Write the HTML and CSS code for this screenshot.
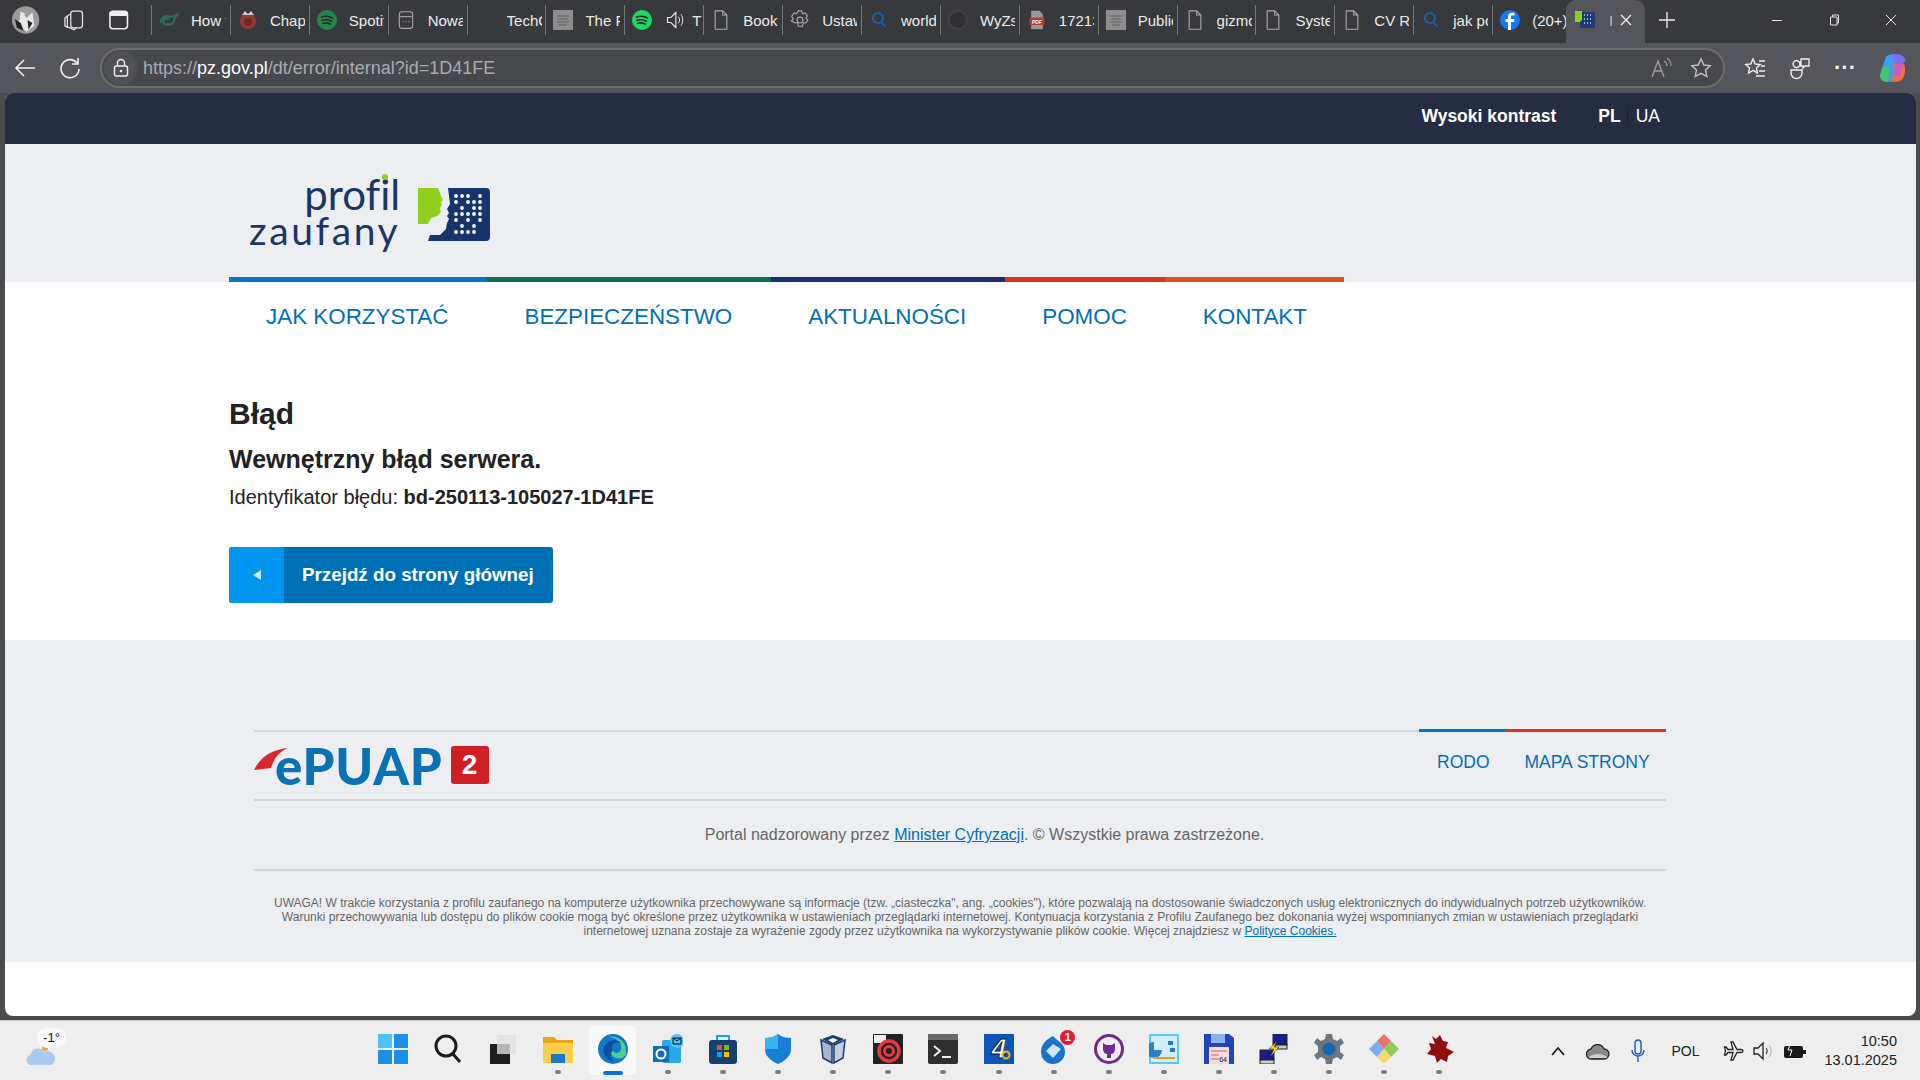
FILE: index.html
```html
<!DOCTYPE html>
<html lang="pl">
<head>
    <meta charset="utf-8">
    <title>Błąd - Profil Zaufany</title>
    <link rel="stylesheet" href="styles.css">
</head>
<body>
    <svg class="sprite" aria-hidden="true">
        <symbol id="i-doc" viewBox="0 0 20 24"><path d="M3 1h9l5 5v17H3zM12 1v5h5" fill="none" stroke="#a9aaad" stroke-width="1.3"/></symbol>
        <symbol id="i-spotify" viewBox="0 0 20 20"><circle cx="10" cy="10" r="10" fill="currentColor"/><path d="M4.500 7c4-1.200 8-.8 11 1M5 10.200c3.500-.9 7-.5 9.500 1M5.800 13.200c3-.7 5.500-.3 7.700.9" fill="none" stroke="#26272a" stroke-width="1.600" stroke-linecap="round"/></symbol>
        <symbol id="i-search" viewBox="0 0 20 20"><circle cx="9" cy="8" r="5" fill="none" stroke="#1d5fa8" stroke-width="2"/><path d="M12.500 12l4 5" stroke="#1d5fa8" stroke-width="2"/></symbol>
        <symbol id="i-thumb" viewBox="0 0 20 20"><rect width="20" height="20" fill="#8e8e8e"/><path d="M4 6h12M5 9h10M4 12h12M6 15h8" stroke="#5f5f5f"/></symbol>
    </svg>

    <div class="tabstrip">
        <div class="strip-start">
            <svg class="avatar" viewBox="0 0 30 30"><circle cx="15" cy="15" r="14" fill="#9a9a9a"/><path d="M6 20l6-12 4 5 6-6 2 14-8 6zM10 6l5 3-6 4z" fill="#e8e8e8"/><path d="M4 14l6 4 3 8-7-3zM17 15l5 3-4 7z" fill="#222"/></svg>
            <svg class="strip-icon" viewBox="0 0 24 24"><rect x="9" y="3" width="12" height="17" rx="2.500" fill="none" stroke="#e6e6e6" stroke-width="1.300"/><path d="M9 5.500L5.500 8v11l7 3 2-2M5.500 8L3 10v8l3 2" fill="none" stroke="#e6e6e6" stroke-width="1.300"/></svg>
            <svg class="strip-icon" viewBox="0 0 24 24"><rect x="3" y="3" width="18" height="18" rx="3" fill="none" stroke="#f0f0f0" stroke-width="1.600"/><rect x="3" y="3" width="18" height="5" rx="2" fill="#f0f0f0"/></svg>
        </div>
        <div class="tab"><svg class="favicon" viewBox="0 0 20 20"><path d="M2 13a6 6 0 0 1 9-6l7-2-3 4c1 4-3 6-6 5a3 3 0 1 1 1-4" fill="none" stroke="#2e6e58" stroke-width="2.200"/></svg><span class="tab-label">How to</span></div>
        <div class="tab"><svg class="favicon" viewBox="0 0 20 20"><circle cx="10" cy="11" r="8" fill="#96392e"/><circle cx="10" cy="12" r="4" fill="#6b2a24"/><path d="M4 5l3-4 3 3 3-3 3 4z" fill="#c9c9c9"/></svg><span class="tab-label">Chapter</span></div>
        <div class="tab"><svg class="favicon spotify-dim"><use href="#i-spotify"/></svg><span class="tab-label">Spotify</span></div>
        <div class="tab"><svg class="favicon" viewBox="0 0 20 24"><rect x="2" y="2" width="16" height="20" rx="3" fill="none" stroke="#a9aaad" stroke-width="1.300"/><path d="M2 8h16" stroke="#a9aaad" stroke-width="1.300"/><path d="M6 14h1M9.500 14h1M13 14h1" stroke="#a9aaad" stroke-width="1.500"/></svg><span class="tab-label">Nowa</span></div>
        <div class="tab"><span class="favicon"></span><span class="tab-label">TechCrunch</span></div>
        <div class="tab"><svg class="favicon"><use href="#i-thumb"/></svg><span class="tab-label">The Fo</span></div>
        <div class="tab tab-audio">
            <svg class="favicon spotify-bright"><use href="#i-spotify"/></svg>
            <svg class="favicon" viewBox="0 0 22 24"><path d="M2 9h4l6-6v18l-6-6H2z" fill="none" stroke="#e6e6e6" stroke-width="1.400"/><path d="M15 8c2 2.500 2 5.500 0 8M18 5c3 4 3 10 0 14" fill="none" stroke="#e6e6e6" stroke-width="1.200"/></svg>
            <span class="tab-label">T</span>
        </div>
        <div class="tab"><svg class="favicon"><use href="#i-doc"/></svg><span class="tab-label">Bookmarks</span></div>
        <div class="tab"><svg class="favicon" viewBox="0 0 24 24"><circle cx="12" cy="12" r="3.500" fill="none" stroke="#a9aaad" stroke-width="1.300"/><path d="M10 1h4l1 3.500 3-1 3 3.500-2 3 2.500 2-2.500 3.500-3-.5-1 4.500h-5l-1-4.500-3 .5L1.500 13 4 11 2 7.500 5 3.500l3 1z" fill="none" stroke="#a9aaad" stroke-width="1.300"/></svg><span class="tab-label">Ustawienia</span></div>
        <div class="tab"><svg class="favicon"><use href="#i-search"/></svg><span class="tab-label">world</span></div>
        <div class="tab"><svg class="favicon" viewBox="0 0 20 20"><circle cx="10" cy="10" r="9" fill="#2f3033" stroke="#444" stroke-width="1.500"/></svg><span class="tab-label">WyZsz</span></div>
        <div class="tab"><svg class="favicon" viewBox="0 0 20 24"><path d="M3 1h10l4 4v5H3z" fill="#9a9a9a"/><rect x="1" y="9" width="18" height="9" fill="#b33a3a"/><path d="M3 18h14v5H3z" fill="#9a9a9a"/><text x="10" y="16.500" class="pdf-text">PDF</text></svg><span class="tab-label">17213</span></div>
        <div class="tab"><svg class="favicon"><use href="#i-thumb"/></svg><span class="tab-label">Public</span></div>
        <div class="tab"><svg class="favicon"><use href="#i-doc"/></svg><span class="tab-label">gizmodo</span></div>
        <div class="tab"><svg class="favicon"><use href="#i-doc"/></svg><span class="tab-label">System</span></div>
        <div class="tab"><svg class="favicon"><use href="#i-doc"/></svg><span class="tab-label">CV Rys</span></div>
        <div class="tab"><svg class="favicon"><use href="#i-search"/></svg><span class="tab-label">jak pod</span></div>
        <div class="tab"><svg class="favicon" viewBox="0 0 20 20"><circle cx="10" cy="10" r="10" fill="#1877f2"/><path d="M11 20v-8h3l.5-3H11V7c0-1 .5-1.500 1.500-1.500H14.500V3c-3-.6-6.500-.3-6.500 3.500V9H5.500v3H8v8z" fill="#fff"/></svg><span class="tab-label">(20+) F</span></div>
        <div class="tab-active">
            <svg class="favicon" viewBox="0 0 20 20"><rect x="5" y="2" width="15" height="16" fill="#1c3a78"/><path d="M0 1h7v9l-2 2H0z" fill="#8ed11f"/><path d="M9 5h1M12 5h1M15 5h1M9 9h1M12 9h1M15 9h1M9 13h1M12 13h1M15 13h1" stroke="#cfd6e6" stroke-width="1.500"/></svg>
            <span class="tab-label-active">I</span>
            <svg class="tab-close" viewBox="0 0 12 12"><path d="M1 1l10 10M11 1L1 11" stroke="#f2f2f2" stroke-width="1.300"/></svg>
        </div>
        <svg class="new-tab" viewBox="0 0 18 18"><path d="M9 1v16M1 9h16" stroke="#e6e6e6" stroke-width="1.400"/></svg>
        <div class="window-controls">
            <svg viewBox="0 0 12 12"><path d="M1 6.500h10" stroke="#e6e6e6"/></svg>
            <svg viewBox="0 0 12 12"><path d="M2.500 3h6.500v8H2.500zM4.500 3V1h6v8H9" fill="none" stroke="#e6e6e6"/></svg>
            <svg viewBox="0 0 12 12"><path d="M1 1l10 10M11 1L1 11" stroke="#e6e6e6"/></svg>
        </div>
    </div>

    <div class="toolbar">
        <svg class="tool tool-back" viewBox="0 0 24 24"><path d="M22 12H3M11 4l-8 8 8 8" fill="none" stroke="#f0f0f0" stroke-width="1.600"/></svg>
        <svg class="tool tool-reload" viewBox="0 0 24 24"><path d="M19 7a9 9 0 1 0 2 6M20 2v6h-6" fill="none" stroke="#f0f0f0" stroke-width="1.600"/></svg>
        <div class="addressbar">
            <span class="lock-wrap"><svg class="lock" viewBox="0 0 20 20"><rect x="3.500" y="8" width="13" height="10" rx="2" fill="none" stroke="#f0f0f0" stroke-width="1.500"/><path d="M6.500 8V5a3.500 3.500 0 0 1 7 0v3" fill="none" stroke="#f0f0f0" stroke-width="1.500"/><circle cx="10" cy="13" r="1.300" fill="#f0f0f0"/></svg></span>
            <span class="url"><span class="url-dim">https://</span><span class="url-host">pz.gov.pl</span><span class="url-dim">/dt/error/internal?id=1D41FE</span></span>
            <svg class="addr-icon read-aloud" viewBox="0 0 24 24"><path d="M3 21l6-16 6 16M5.500 15h7" fill="none" stroke="#9b9c9f" stroke-width="1.400"/><path d="M15 5c2 1 3 3 3 5M18 2c3 2 4 5 4 8" fill="none" stroke="#9b9c9f" stroke-width="1.200"/></svg>
            <svg class="addr-icon" viewBox="0 0 24 24"><path d="M12 3l2.800 6 6.500.7-4.800 4.400 1.300 6.400L12 17.300l-5.800 3.200 1.300-6.400L2.700 9.700 9.200 9z" fill="none" stroke="#c4c5c7" stroke-width="1.400"/></svg>
        </div>
        <div class="tool-group">
            <svg class="tool" viewBox="0 0 24 24"><path d="M10 3l2.200 5 5 .5-3.800 3.500 1 5-4.400-2.600L5.500 17l1-5L2.700 8.500l5-.5zM16 5h6M18 10h4M16 15h6M13 20h9" fill="none" stroke="#f0f0f0" stroke-width="1.400"/></svg>
            <svg class="tool" viewBox="0 0 24 24"><path d="M13 3h8v7h-4l-2 2v-2h-2zM5 8a3.500 3.500 0 1 1 0 .1zM3 14h11v3a5 5 0 0 1-11 0z" fill="none" stroke="#f0f0f0" stroke-width="1.400"/></svg>
            <span class="tool-dots">···</span>
            <svg class="copilot" viewBox="0 0 24 24"><path d="M6 4c1-2 3-3 5-3h5l-5 22H7c-4 0-6-3-5-7z" fill="#3f9df2"/><path d="M11 1h5c3 0 5 2 6 5l-2 3h-7z" fill="#7d6cf0"/><path d="M4 11h6l-2 12H6c-3 0-5-3-4-6z" fill="#44c46e"/><path d="M13 9h8c1 4 1 8-1 11-1 2-3 3-5 3h-4z" fill="#ef6f4a"/><path d="M14 9h6l-3 9h-5z" fill="#c85bd0"/></svg>
        </div>
    </div>

    <div class="page">
        <div class="topbar">
            <a class="contrast">Wysoki kontrast</a>
            <div class="langs"><a class="lang-on">PL</a><span class="lang-sep"></span><a class="lang-off">UA</a></div>
        </div>

        <div class="brand">
            <div class="container brand-inner">
                <div class="pz-logo">
                    <div class="pz-words"><span class="pz-top">prof<span class="pz-i">i</span>l</span><span class="pz-bottom">zaufany</span></div>
                    <svg class="pz-mark" viewBox="0 0 72 53">
                        <path d="M0 0h20l3 8 2 4-2 2 1 3-2 3 1 4-2 2c-2 3-5 3-8 4l-3 6H0z" fill="#8ed11f"/>
                        <path d="M30 0h38a4 4 0 0 1 4 4v45a4 4 0 0 1-4 4H10l2-6h10l6-6 1-6 2-4-2-3 2-3-2-4 3-5z" fill="#17346d"/>
                        <g class="pz-dots" fill="#fff">
                            <circle cx="38" cy="8" r="1.900"/><circle cx="44" cy="8" r="1.900"/><circle cx="50" cy="8" r="1.900"/><circle cx="62" cy="8" r="1.900"/>
                            <circle cx="38" cy="14" r="1.900"/><circle cx="50" cy="14" r="1.900"/><circle cx="56" cy="14" r="1.900"/><circle cx="62" cy="14" r="1.900"/>
                            <circle cx="44" cy="20" r="1.900"/><circle cx="56" cy="20" r="1.900"/><circle cx="62" cy="20" r="1.900"/>
                            <circle cx="38" cy="26" r="1.900"/><circle cx="44" cy="26" r="1.900"/><circle cx="50" cy="26" r="1.900"/><circle cx="56" cy="26" r="1.900"/><circle cx="62" cy="26" r="1.900"/>
                            <circle cx="38" cy="32" r="1.900"/><circle cx="50" cy="32" r="1.900"/><circle cx="62" cy="32" r="1.900"/>
                            <circle cx="44" cy="38" r="1.900"/><circle cx="56" cy="38" r="1.900"/>
                            <circle cx="38" cy="44" r="1.900"/><circle cx="44" cy="44" r="1.900"/><circle cx="50" cy="44" r="1.900"/><circle cx="56" cy="44" r="1.900"/>
                        </g>
                    </svg>
                </div>
                <div class="stripes">
                    <span class="stripe s-blue"></span><span class="stripe s-green"></span><span class="stripe s-navy"></span><span class="stripe s-red"></span><span class="stripe s-orange"></span>
                </div>
            </div>
        </div>

        <div class="container">
            <nav class="mainnav">
                <a class="nav-1">JAK KORZYSTAĆ</a>
                <a class="nav-2">BEZPIECZEŃSTWO</a>
                <a class="nav-3">AKTUALNOŚCI</a>
                <a class="nav-4">POMOC</a>
                <a class="nav-5">KONTAKT</a>
            </nav>

            <main class="content">
                <h1>Błąd</h1>
                <h2>Wewnętrzny błąd serwera.</h2>
                <p>Identyfikator błędu: <strong>bd-250113-105027-1D41FE</strong></p>
                <a class="btn-home"><span class="btn-arrow"><span class="arrow-left"></span></span><span class="btn-text">Przejdź do strony głównej</span></a>
            </main>
        </div>

        <footer class="footer">
            <div class="footer-inner">
                <div class="footer-top">
                    <div class="epuap">
                        <svg class="epuap-swoosh" viewBox="0 0 34 22"><path d="M0 22C6 10 16 2 34 0c-9 4-14 10-17 20z" fill="#d8262c"/></svg>
                        <span class="epuap-word">ePUAP</span>
                        <span class="epuap-two">2</span>
                    </div>
                    <div class="footer-links">
                        <a class="link-rodo">RODO</a>
                        <a class="link-map">MAPA STRONY</a>
                    </div>
                </div>
                <div class="footer-portal">Portal nadzorowany przez <a>Minister Cyfryzacji</a>. © Wszystkie prawa zastrzeżone.</div>
                <div class="footer-note">UWAGA! W trakcie korzystania z profilu zaufanego na komputerze użytkownika przechowywane są informacje (tzw. „ciasteczka", ang. „cookies"), które pozwalają na dostosowanie świadczonych usług elektronicznych do indywidualnych potrzeb użytkowników.<br>Warunki przechowywania lub dostępu do plików cookie mogą być określone przez użytkownika w ustawieniach przeglądarki internetowej. Kontynuacja korzystania z Profilu Zaufanego bez dokonania wyżej wspomnianych zmian w ustawieniach przeglądarki<br>internetowej uznana zostaje za wyrażenie zgody przez użytkownika na wykorzystywanie plików cookie. Więcej znajdziesz w <a>Polityce Cookies.</a></div>
            </div>
        </footer>
    </div>

    <div class="taskbar">
        <div class="weather">
            <svg class="weather-icon" viewBox="0 0 30 20"><circle cx="19" cy="3" r="3" fill="#f0a040"/><path d="M6 20a5 5 0 0 1-1-10 7 7 0 0 1 13-3 6 6 0 0 1 7 13z" fill="#a9c9ef"/></svg>
            <span class="weather-temp">-1°</span>
        </div>
        <div class="apps">
            <div class="app"><svg viewBox="0 0 30 30"><path d="M0 0h14v14H0zM16 0h14v14H16zM0 16h14v14H0zM16 16h14v14H16z" fill="#1a8fe6"/><path d="M0 0h14v14H0z" fill="#4fc3f7"/></svg></div>
            <div class="app"><svg viewBox="0 0 30 30"><circle cx="13" cy="12" r="10" fill="none" stroke="#1c1c1c" stroke-width="3"/><path d="M20 20l7 8" stroke="#1c1c1c" stroke-width="3"/></svg></div>
            <div class="app"><svg viewBox="0 0 30 30"><rect x="2" y="10" width="20" height="20" fill="#1e1e1e"/><rect x="9" y="1" width="19" height="19" fill="#e4e4e4"/><rect x="9" y="10" width="13" height="10" fill="#b5b5b5"/></svg></div>
            <div class="app dot"><svg viewBox="0 0 30 30"><path d="M0 3h11l3 3h16v23H0z" fill="#e6a417"/><path d="M0 9h30v20H0z" fill="#fbcf4a"/><rect x="8" y="20" width="14" height="9" fill="#1c78c9"/></svg></div>
            <div class="app app-active"><svg viewBox="0 0 30 30"><circle cx="15" cy="15" r="15" fill="#1279c8"/><path d="M28 21C30 8 20 1 11 3 20 4 24 9 23 15c-1 5-8 5-8 1-5 5 3 10 9 8z" fill="#4fd08a"/><path d="M15 16c-3-5 2-9 8-7-4-5-14-3-17 4-2 7 3 14 11 15-5-3-6-8-2-12z" fill="#0b4f9e"/></svg><span class="app-bar"></span></div>
            <div class="app dot"><svg viewBox="0 0 30 30"><rect x="9" y="6" width="19" height="23" rx="2" fill="#28a8ea"/><rect x="0" y="12" width="16" height="16" fill="#0f6cbd"/><circle cx="8" cy="20" r="4.500" fill="none" stroke="#fff" stroke-width="2"/><circle cx="24" cy="7" r="7" fill="#4fc3f7"/><path d="M20 4h8v6h-8zM20 4l4 3 4-3" fill="none" stroke="#111" stroke-width="1"/></svg></div>
            <div class="app dot"><svg viewBox="0 0 30 30"><path d="M9 6V2h12v4" fill="none" stroke="#1aa1e6" stroke-width="2"/><rect x="1" y="6" width="28" height="24" rx="3" fill="#17406f"/><path d="M9 11h5v5H9z" fill="#f25022"/><path d="M16 11h5v5h-5z" fill="#7fba00"/><path d="M9 18h5v5H9z" fill="#00a4ef"/><path d="M16 18h5v5h-5z" fill="#ffb900"/></svg></div>
            <div class="app dot"><svg viewBox="0 0 30 30"><path d="M15 0c4 3 8 4 13 4v11c0 7-6 12-13 15C8 27 2 22 2 15V4c5 0 9-1 13-4z" fill="#1a7fd4"/><path d="M15 0c-4 3-8 4-13 4v11h13z" fill="#35b4f0"/></svg></div>
            <div class="app dot"><svg viewBox="0 0 30 30"><path d="M3 6l11 5v18L5 24z" fill="#aab4cc" stroke="#1a3a6e" stroke-width="1.500"/><path d="M27 6l-11 5v18l9-5z" fill="#c5cde0" stroke="#1a3a6e" stroke-width="1.500"/><path d="M15 1l11 4-11 6L4 5z" fill="#1a3a6e"/><path d="M15 4l5 2-5 3-5-3z" fill="#fff"/></svg></div>
            <div class="app dot"><svg viewBox="0 0 30 30"><rect width="30" height="30" rx="1" fill="#222"/><rect x="1" y="1" width="12" height="8" fill="#eee"/><circle cx="16" cy="17" r="10" fill="none" stroke="#e33a44" stroke-width="3.500"/><circle cx="16" cy="17" r="4.500" fill="none" stroke="#e33a44" stroke-width="3"/></svg></div>
            <div class="app dot"><svg viewBox="0 0 30 30"><rect width="30" height="30" rx="2" fill="#2f2f2f"/><rect width="30" height="6" fill="#6a6a6a"/><path d="M6 12l6 5-6 5" fill="none" stroke="#eee" stroke-width="2"/><path d="M14 23h9" stroke="#eee" stroke-width="2"/></svg></div>
            <div class="app dot"><svg viewBox="0 0 30 30"><rect width="30" height="30" fill="#0f55b8"/><text x="15" y="24" class="app-four">4</text><circle cx="22" cy="21" r="3.500" fill="none" stroke="#f0b020" stroke-width="2"/></svg></div>
            <div class="app dot"><svg viewBox="0 0 30 30"><path d="M14 2c4 5 12 7 12 16a12 12 0 0 1-24 0C2 11 6 6 14 2z" fill="#1a72c9"/><path d="M14 10l8 5-8 9-7-7z" fill="#cfe4f7"/></svg><span class="badge">1</span></div>
            <div class="app dot"><svg viewBox="0 0 30 30"><circle cx="15" cy="15" r="13.500" fill="none" stroke="#6f2b91" stroke-width="3"/><path d="M9 9l3 2h6l3-2v6c0 3-2 5-4 5v4h-4v-4c-2 0-4-2-4-5z" fill="#6f2b91"/></svg></div>
            <div class="app dot"><svg viewBox="0 0 30 30"><rect width="30" height="30" fill="#5ac8f0"/><rect x="2" y="2" width="26" height="26" fill="#d3eefa"/><path d="M5 8a8 8 0 1 0 8 8H5z" fill="#2c7fc4"/><path d="M19 7h5v4h-5zM21 14h5v4h-5z" fill="#1a7fd4"/><path d="M4 24h22" stroke="#e5a020" stroke-width="2"/></svg></div>
            <div class="app dot"><svg viewBox="0 0 30 30"><path d="M0 0h25l5 4v26H0z" fill="#2046b8"/><rect x="7" y="0" width="14" height="9" fill="#8fb0ea"/><rect x="5" y="13" width="20" height="17" fill="#f4dcdc"/><path d="M7 17h16M7 21h8M7 25h8" stroke="#d06060"/><text x="23" y="28" class="floppy-text">64</text></svg></div>
            <div class="app dot"><svg viewBox="0 0 30 30"><rect x="14" y="0" width="14" height="11" fill="#1a1a8e" stroke="#222"/><rect x="16" y="11" width="12" height="4" fill="#ccc" stroke="#222"/><rect x="1" y="16" width="14" height="10" fill="#1a1a8e" stroke="#222"/><rect x="1" y="26" width="14" height="4" fill="#ccc" stroke="#222"/><path d="M18 7l-8 8h5l-4 8 9-10h-5z" fill="#f7e017" stroke="#222" stroke-width=".5"/></svg></div>
            <div class="app dot"><svg viewBox="0 0 30 30"><path d="M12 0h6l1 5 4 2 4-3 3 5-4 3v6l4 3-3 5-4-3-4 2-1 5h-6l-1-5-4-2-4 3-3-5 4-3v-6L0 9l3-5 4 3 4-2z" fill="#6e7781"/><circle cx="15" cy="15" r="6.500" fill="#1168b0"/></svg></div>
            <div class="app dot"><svg viewBox="0 0 30 30"><path d="M15 0l7 7-7 8-7-8z" fill="#e8736b"/><path d="M8 7l7 8-7 8-8-8z" fill="#78aef5"/><path d="M22 7l8 8-8 8-7-8z" fill="#8ecb5a"/><path d="M15 15l7 8-7 7-7-7z" fill="#f6d96b"/></svg></div>
            <div class="app dot"><svg viewBox="0 0 30 30"><path d="M8 2l4 3 4-4 3 6 5 1-2 6 8 4-6 4-1 6-6-3-4 4-2-7-8-2 4-5-2-6 6 1z" fill="#8e0f0f"/></svg></div>
        </div>
        <div class="tray">
            <svg class="tray-up" viewBox="0 0 16 10"><path d="M2 9l6-7 6 7" fill="none" stroke="#111" stroke-width="1.600"/></svg>
            <svg class="tray-cloud" viewBox="0 0 24 18"><path d="M6 17a5 5 0 0 1-1-10 7 7 0 0 1 13 0 5 5 0 0 1 0 10z" fill="#8b8b8b" stroke="#222" stroke-width="1.300"/><path d="M3 15c5-4 13-4 18 0v1H3z" fill="#d0d0d0"/></svg>
            <svg class="tray-mic" viewBox="0 0 16 24"><rect x="5" y="1" width="6" height="14" rx="3" fill="none" stroke="#1d5fb8" stroke-width="1.400"/><path d="M2 11a6 6 0 0 0 12 0M8 17v6" fill="none" stroke="#1d5fb8" stroke-width="1.400"/></svg>
            <span class="tray-lang">POL</span>
            <svg class="tray-plane" viewBox="0 0 22 22"><path d="M20 11c0-1-1-1.500-2-1.500h-4L10 2H8l2 7.500H5L3 7H1.500l1 4-1 4H3l2-2.500h5L8 20h2l4-7.500h4c1 0 2-.5 2-1.500z" fill="none" stroke="#222" stroke-width="1.300"/></svg>
            <svg class="tray-sound" viewBox="0 0 22 22"><path d="M2 8h4l5-5v16l-5-5H2z" fill="none" stroke="#222" stroke-width="1.300"/><path d="M14 8c1.500 2 1.500 4 0 6" fill="none" stroke="#444" stroke-width="1.200"/><path d="M17 5c3 4 3 8 0 12" fill="none" stroke="#bbb" stroke-width="1.200"/></svg>
            <svg class="tray-battery" viewBox="0 0 24 18"><rect x="1" y="4" width="19" height="12" rx="2" fill="#1a1a1a"/><rect x="20" y="8" width="3" height="4" fill="#1a1a1a"/><path d="M8 0L5 8h4l-2 6" fill="none" stroke="#fff" stroke-width="1"/></svg>
            <div class="clock"><span>10:50</span><span>13.01.2025</span></div>
        </div>
    </div>
</body>
</html>
```

FILE: styles.css
```css
* {
    box-sizing: border-box;
}

html, body {
    height: 100%;
}

body {
    margin: 0;
    width: 1920px;
    height: 1080px;
    overflow: hidden;
    display: flex;
    flex-direction: column;
    background-color: #4b4c50;
    font-family: "Liberation Sans", Arial, sans-serif;
    color: #222;
}

a {
    cursor: pointer;
}

.sprite {
    width: 0;
    height: 0;
    position: absolute;
}

/* browser tabs */
.tabstrip {
    height: 43px;
    flex: none;
    display: flex;
    align-items: center;
    background-color: #38393d;
    color: #ececec;
    font-size: 15px;
}

.strip-start {
    width: 151px;
    display: flex;
    align-items: center;
    flex: none;
    padding-left: 11px;
    margin-bottom: 3px;
}

.avatar {
    width: 30px;
    height: 30px;
    margin-right: 22px;
}

.strip-icon {
    width: 24px;
    height: 24px;
    margin-right: 21px;
}

.tab {
    width: 78.9px;
    height: 30px;
    margin-bottom: 3px;
    flex: none;
    display: flex;
    align-items: center;
    padding-left: 7px;
    border-left: 1px solid #77787b;
    overflow: hidden;
}

.favicon {
    width: 20px;
    height: 20px;
    flex: none;
}

.spotify-dim {
    color: #22894a;
}

.spotify-bright {
    color: #1ed760;
}

.tab-label {
    margin-left: 12px;
    width: 35px;
    flex: none;
    overflow: hidden;
    white-space: nowrap;
}

.tab-audio .favicon + .favicon {
    margin-left: 13px;
}

.tab-audio .tab-label {
    margin-left: 7px;
    width: 10px;
}

.pdf-text {
    font-size: 6px;
    font-weight: bold;
    fill: #fff;
    text-anchor: middle;
}

.tab-active {
    width: 79px;
    height: 43px;
    margin-left: -5px;
    flex: none;
    display: flex;
    align-items: center;
    padding: 0 0 3px 9px;
    background-color: #55565b;
    border-radius: 10px 10px 0 0;
}

.tab-label-active {
    margin-left: 14px;
    color: #bbb;
}

.tab-close {
    width: 12px;
    height: 12px;
    margin-left: 7px;
}

.new-tab {
    width: 18px;
    height: 18px;
    margin: 0 0 3px 13px;
}

.window-controls {
    margin: 0 0 3px auto;
    display: flex;
    gap: 45px;
    padding-right: 23px;
}

.window-controls svg {
    width: 12px;
    height: 12px;
}

/* address row */
.toolbar {
    height: 50px;
    flex: none;
    display: flex;
    align-items: center;
    background-color: #55565b;
}

.tool {
    width: 24px;
    height: 24px;
    flex: none;
}

.tool-back {
    margin-left: 13px;
}

.tool-reload {
    margin-left: 21px;
}

.addressbar {
    width: 1625px;
    height: 40px;
    margin-left: 18px;
    display: flex;
    align-items: center;
    background-color: #47484c;
    border: 2px solid #6c6d71;
    border-radius: 20px;
    padding: 0 10px 0 2px;
}

.lock-wrap {
    width: 34px;
    height: 34px;
    border-radius: 50%;
    display: flex;
    align-items: center;
    justify-content: center;
    background-color: #505155;
    flex: none;
}

.lock {
    width: 20px;
    height: 20px;
}

.url {
    margin-left: 5px;
    font-size: 18px;
    white-space: nowrap;
}

.url-dim {
    color: #a9abb2;
}

.url-host {
    color: #fff;
}

.addr-icon {
    width: 24px;
    height: 24px;
    margin-left: 16px;
}

.read-aloud {
    margin-left: auto;
}

.tool-group {
    display: flex;
    align-items: center;
    margin-left: 18px;
    gap: 21px;
}

.tool-dots {
    width: 24px;
    font-size: 22px;
    font-weight: bold;
    color: #f0f0f0;
    text-align: center;
}

.copilot {
    width: 30px;
    height: 30px;
}

/* the page itself */
.page {
    flex: 1;
    margin: 0 4px 4px 5px;
    background-color: #fff;
    border-radius: 8px;
    overflow: hidden;
    display: flex;
    flex-direction: column;
}

.topbar {
    height: 51px;
    flex: none;
    display: flex;
    align-items: center;
    justify-content: flex-end;
    padding: 0 256px 5px 0;
    background-color: #262d42;
    color: #fff;
    font-size: 17.5px;
}

.contrast {
    font-weight: bold;
}

.langs {
    display: flex;
    align-items: center;
    margin-left: 42px;
}

.lang-on {
    font-weight: bold;
}

.lang-sep {
    width: 1px;
    height: 20px;
    margin: 0 8px 0 6px;
    background-color: #1b2033;
}

.container {
    width: 1115px;
    margin-left: 224px;
}

.brand {
    height: 138px;
    flex: none;
    background-color: #eceef2;
}

.brand-inner {
    height: 100%;
    display: flex;
    flex-direction: column;
    justify-content: flex-end;
}

.pz-logo {
    display: flex;
    align-items: flex-start;
    margin-left: 20px;
    height: 133px;
    padding-top: 32px;
}

.pz-words {
    display: flex;
    flex-direction: column;
    align-items: flex-end;
    font-family: "Lato", sans-serif;
    color: #1a3568;
}

.pz-top {
    font-size: 42px;
    line-height: 36px;
}

.pz-bottom {
    font-size: 39px;
    line-height: 36px;
    letter-spacing: 2.6px;
}

.pz-i {
    position: relative;
}

.pz-i::before {
    content: "";
    position: absolute;
    left: 2px;
    top: 5px;
    width: 6px;
    height: 6px;
    border-radius: 50%;
    background-color: #8ed11f;
}

.pz-mark {
    width: 72px;
    height: 53px;
    margin: 12px 0 0 18px;
}

.stripes {
    display: flex;
    height: 5px;
    flex: none;
}

.stripe {
    display: block;
}

.s-blue { width: 258px; background-color: #0179c2; }
.s-green { width: 284px; background-color: #0c6f58; }
.s-navy { width: 234px; background-color: #1b2e6b; }
.s-red { width: 160px; background-color: #d8341e; }
.s-orange { width: 179px; background-color: #d9531e; }

.mainnav {
    height: 69px;
    padding-top: 1px;
    margin-left: -1px;
    display: flex;
    align-items: center;
    font-size: 22.4px;
    color: #0070b4;
}

.mainnav a {
    display: block;
    padding: 0 38px;
    white-space: nowrap;
}

.content {
    padding-top: 43px;
}

h1 {
    margin: 0;
    font-size: 30px;
    line-height: 40px;
    color: #222;
}

h2 {
    margin: 5px 0 0;
    font-size: 25px;
    line-height: 40px;
}

.content p {
    margin: 0;
    font-size: 20px;
    line-height: 36px;
}

.btn-home {
    display: flex;
    width: 324px;
    height: 56px;
    margin-top: 32px;
    border-radius: 3px;
    overflow: hidden;
    background-color: #0070b4;
    color: #fff;
    font-size: 18.8px;
    font-weight: bold;
    align-items: center;
}

.btn-arrow {
    width: 55px;
    height: 100%;
    display: flex;
    align-items: center;
    justify-content: center;
    background-color: #0095ee;
}

.arrow-left {
    width: 0;
    height: 0;
    border-top: 5px solid transparent;
    border-bottom: 5px solid transparent;
    border-right: 8px solid #cfe9fb;
}

.btn-text {
    margin-left: 18px;
    white-space: nowrap;
}

.footer {
    height: 322px;
    margin-top: 37px;
    flex: none;
    background-color: #eceef2;
    padding-top: 90px;
}

.footer-inner {
    width: 1412px;
    margin-left: 249px;
}

.footer-top {
    height: 71px;
    display: flex;
    justify-content: space-between;
    border-top: 2px solid #d0d4dc;
    border-bottom: 2px solid #d0d4dc;
}

.epuap {
    display: flex;
    align-items: center;
    position: relative;
    padding-left: 21px;
    height: 56px;
    margin-top: 5px;
}

.epuap-swoosh {
    position: absolute;
    left: 0;
    top: 11px;
    width: 34px;
    height: 22px;
}

.epuap-word {
    font-family: "Lato", sans-serif;
    font-weight: 900;
    font-size: 51px;
    letter-spacing: .8px;
    color: #0a72b3;
}

.epuap-two {
    width: 38px;
    height: 38px;
    margin-left: 8px;
    border-radius: 3px;
    background-color: #cf1f25;
    color: #fff;
    font-size: 28px;
    font-weight: bold;
    text-align: center;
    line-height: 38px;
}

.footer-links {
    display: flex;
    align-items: center;
    height: 63px;
    margin-top: -3px;
    font-size: 17.5px;
    color: #0070b4;
    border-top: 3px solid #d8341e;
    width: 247px;
    position: relative;
}

.footer-links::before {
    content: "";
    position: absolute;
    left: 0;
    top: -3px;
    width: 87px;
    height: 3px;
    background-color: #0179c2;
}

.link-rodo {
    margin-left: 18px;
}

.link-map {
    margin-left: 35px;
}

.footer-portal {
    height: 70px;
    line-height: 68px;
    padding-left: 49px;
    text-align: center;
    border-bottom: 2px solid #d0d4dc;
    font-size: 16px;
    color: #666;
    white-space: nowrap;
}

.footer-portal a,
.footer-note a {
    color: #0070b4;
    text-decoration: underline;
}

.footer-note {
    margin-top: 25px;
    font-size: 12px;
    line-height: 14px;
    color: #666;
    text-align: center;
    white-space: nowrap;
}

/* windows taskbar */
.taskbar {
    height: 60px;
    flex: none;
    display: flex;
    align-items: center;
    position: relative;
    background-color: #eeeeee;
    border-top: 1px solid #cfcfcf;
}

.weather {
    width: 365px;
    flex: none;
    position: relative;
    height: 100%;
}

.weather-icon {
    position: absolute;
    left: 26px;
    top: 24px;
    width: 30px;
    height: 20px;
}

.weather-temp {
    position: absolute;
    left: 37px;
    top: 7px;
    width: 29px;
    height: 20px;
    border-radius: 12px;
    background-color: #f8f8f8;
    font-size: 13px;
    line-height: 20px;
    text-align: center;
    color: #111;
}

.apps {
    display: flex;
    height: 100%;
}

.app {
    width: 55.1px;
    height: 100%;
    flex: none;
    display: flex;
    align-items: center;
    justify-content: center;
    position: relative;
    padding-bottom: 4px;
}

.app svg {
    width: 30px;
    height: 30px;
}

.app-four {
    font-size: 27px;
    font-weight: bold;
    font-style: italic;
    fill: #fff;
    stroke: #111;
    stroke-width: .8px;
    text-anchor: middle;
}

.dot::after {
    content: "";
    position: absolute;
    left: 50%;
    bottom: 6px;
    width: 6px;
    height: 4px;
    margin-left: -3px;
    border-radius: 2px;
    background-color: #7d7d7d;
}

.app-active::before {
    content: "";
    position: absolute;
    left: 4px;
    right: 4px;
    top: 5px;
    bottom: 5px;
    background-color: #f8f8f8;
    border-radius: 4px;
}

.app-active svg {
    position: relative;
}

.app-bar {
    position: absolute;
    left: 18px;
    bottom: 5px;
    width: 20px;
    height: 4px;
    border-radius: 2px;
    background-color: #0a74d6;
}

.badge {
    position: absolute;
    top: 9px;
    right: 6px;
    width: 15px;
    height: 15px;
    border-radius: 50%;
    background-color: #e81a3a;
    color: #fff;
    font-size: 11px;
    font-weight: bold;
    line-height: 15px;
    text-align: center;
}

.floppy-text {
    font-size: 7px;
    fill: #222;
    text-anchor: end;
}

.tray {
    margin-left: auto;
    display: flex;
    align-items: center;
    padding-right: 23px;
    color: #222;
}

.tray svg {
    flex: none;
}

.tray-up { width: 16px; height: 10px; margin-right: 20px; }
.tray-cloud { width: 24px; height: 18px; margin-right: 20px; }
.tray-mic { width: 16px; height: 24px; margin-right: 25px; }
.tray-plane { width: 22px; height: 22px; margin: 0 7px 0 24px; }
.tray-sound { width: 22px; height: 22px; margin-right: 9px; }
.tray-battery { width: 24px; height: 18px; margin-right: 17px; }

.tray-lang {
    font-size: 14px;
}

.clock {
    display: flex;
    flex-direction: column;
    align-items: flex-end;
    gap: 3px;
    font-size: 14.5px;
    line-height: 16px;
}
```
